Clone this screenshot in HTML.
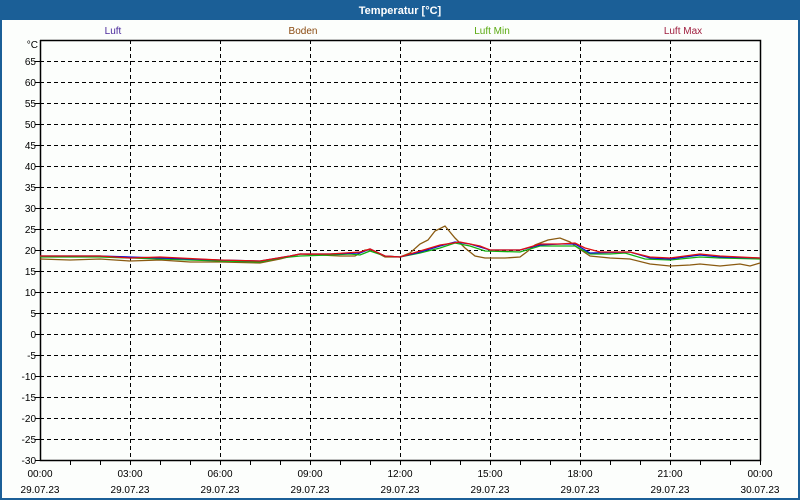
<!DOCTYPE html>
<html><head><style>
html,body{margin:0;padding:0;width:800px;height:500px;overflow:hidden;background:#fcfefc;}
svg text{font-family:"Liberation Sans",sans-serif;font-size:10px;}
</style></head><body>
<svg width="800" height="500" xmlns="http://www.w3.org/2000/svg">
<rect x="0" y="0" width="800" height="500" fill="#1b5f97"/>
<rect x="2" y="20" width="796" height="478" fill="#fcfefc"/>
<text x="400" y="14" fill="#fff" text-anchor="middle" style="font-weight:bold;font-size:11px">Temperatur [°C]</text>
<text x="113" y="34" fill="#4b2a9c" text-anchor="middle">Luft</text>
<text x="303" y="34" fill="#8a4a10" text-anchor="middle">Boden</text>
<text x="492" y="34" fill="#5aaa10" text-anchor="middle">Luft Min</text>
<text x="683" y="34" fill="#a02040" text-anchor="middle">Luft Max</text>
<g stroke="#000" stroke-width="1" stroke-dasharray="4,3" fill="none">
<path d="M40 61.5H760M40 82.5H760M40 103.5H760M40 124.5H760M40 145.5H760M40 166.5H760M40 187.5H760M40 208.5H760M40 229.5H760M40 250.5H760M40 271.5H760M40 292.5H760M40 313.5H760M40 334.5H760M40 355.5H760M40 376.5H760M40 397.5H760M40 418.5H760M40 439.5H760"/>
<path d="M130.5 40V460M220.5 40V460M310.5 40V460M400.5 40V460M490.5 40V460M580.5 40V460M670.5 40V460"/>
</g>
<path d="M40 40.5H760.5V460.5H40.5V40" stroke="#000" stroke-width="1.5" fill="none"/>
<g stroke="#000" stroke-width="1">
<path d="M70.5 460V465M100.5 460V465M130.5 460V465M160.5 460V465M190.5 460V465M220.5 460V465M250.5 460V465M280.5 460V465M310.5 460V465M340.5 460V465M370.5 460V465M400.5 460V465M430.5 460V465M460.5 460V465M490.5 460V465M520.5 460V465M550.5 460V465M580.5 460V465M610.5 460V465M640.5 460V465M670.5 460V465M700.5 460V465M730.5 460V465M760.5 460V465"/>
<path d="M35 61.5H40M35 82.5H40M35 103.5H40M35 124.5H40M35 145.5H40M35 166.5H40M35 187.5H40M35 208.5H40M35 229.5H40M35 250.5H40M35 271.5H40M35 292.5H40M35 313.5H40M35 334.5H40M35 355.5H40M35 376.5H40M35 397.5H40M35 418.5H40M35 439.5H40M35 460.5H40"/>
</g>
<g fill="#000" text-anchor="end">
<text x="38" y="48">°C</text>
<text x="36" y="65">65</text><text x="36" y="86">60</text><text x="36" y="107">55</text><text x="36" y="128">50</text><text x="36" y="149">45</text><text x="36" y="170">40</text><text x="36" y="191">35</text><text x="36" y="212">30</text><text x="36" y="233">25</text><text x="36" y="254">20</text><text x="36" y="275">15</text><text x="36" y="296">10</text><text x="36" y="317">5</text><text x="36" y="338">0</text><text x="36" y="359">-5</text><text x="36" y="380">-10</text><text x="36" y="401">-15</text><text x="36" y="422">-20</text><text x="36" y="443">-25</text><text x="36" y="464">-30</text>
</g>
<g fill="#000" text-anchor="middle">
<text x="40" y="477">00:00</text><text x="130" y="477">03:00</text><text x="220" y="477">06:00</text><text x="310" y="477">09:00</text><text x="400" y="477">12:00</text><text x="490" y="477">15:00</text><text x="580" y="477">18:00</text><text x="670" y="477">21:00</text><text x="760" y="477">00:00</text>
<text x="40" y="493">29.07.23</text><text x="130" y="493">29.07.23</text><text x="220" y="493">29.07.23</text><text x="310" y="493">29.07.23</text><text x="400" y="493">29.07.23</text><text x="490" y="493">29.07.23</text><text x="580" y="493">29.07.23</text><text x="670" y="493">29.07.23</text><text x="760" y="493">30.07.23</text>
</g>
<g fill="none" stroke-width="1.3">
<polyline stroke="#8a5a10" points="40,259 70,260 100,259 130,261 160,260 190,262 220,262 260,263 280,259 300,254 320,255 340,256 355,256 365,250 372,250 385,257 400,257 410,253 420,244 428,240 435,231 445,226 455,238 465,248 475,256 485,258 505,258 520,257 528,251 535,245 548,240 560,238 570,242 578,248 590,256 610,258 630,259 650,264 670,266 690,265 700,264 720,266 740,264 750,266 760,263"/>
<polyline stroke="#10b010" points="40,257 100,257 160,259 220,261 260,262 280,258 300,256 330,255 350,254 360,255 370,251 385,256 400,257 420,253 440,248 455,243 470,246 485,251 520,252 540,246 560,246 575,246 590,254 610,254 625,253 645,259 670,260 700,257 720,258 760,259"/>
<polyline stroke="#1010d0" points="40,256 100,256 160,258 220,260 260,261 290,256 300,254 330,254 360,253 370,249 385,256 400,257 420,252 440,246 455,242 470,244 490,250 520,250 540,245 560,244 575,244 590,253 630,252 650,258 670,259 700,255 720,257 760,258"/>
<polyline stroke="#e01010" points="40,256 100,256 130,258 160,257 220,260 260,261 290,256 300,254 330,254 360,252 370,249 385,256 400,257 420,251 440,245 460,242 480,246 490,250 520,250 540,244 560,244 575,243 585,248 600,252 630,252 650,257 670,258 700,254 720,256 760,258"/>
</g>
</svg>
</body></html>
